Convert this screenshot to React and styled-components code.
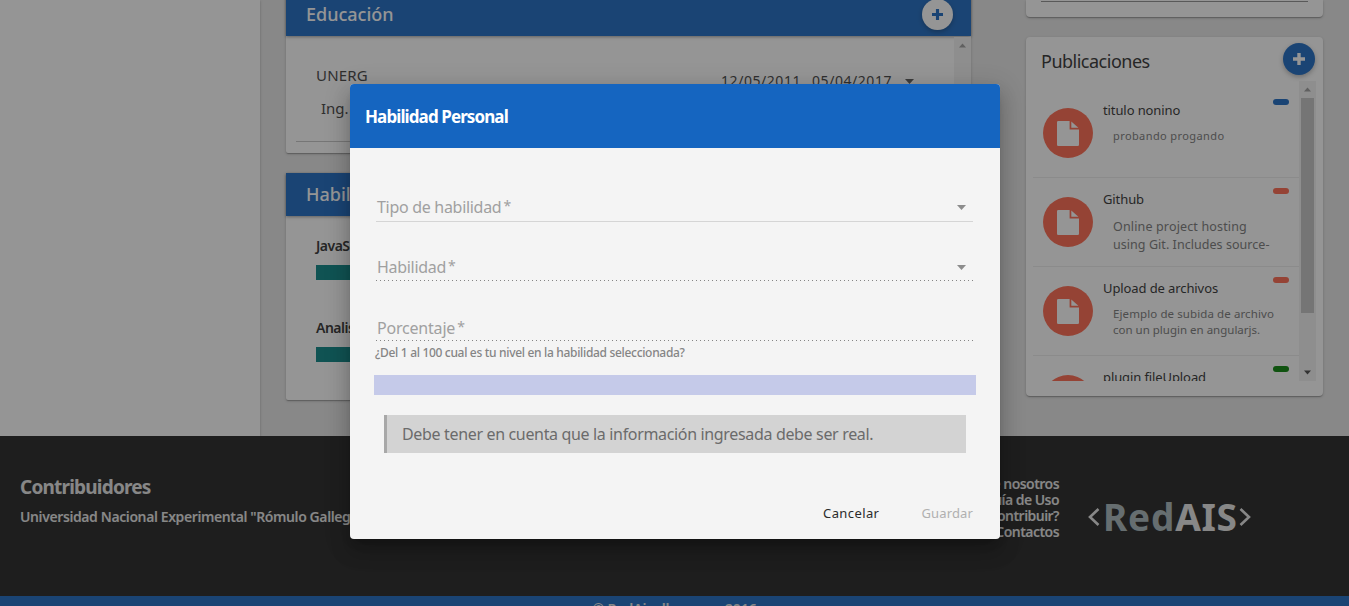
import React from "react";
import styled, { createGlobalStyle } from "styled-components";

const Global = createGlobalStyle`
  * { box-sizing: border-box; }
  body { margin: 0; overflow: hidden; background: #e6e6e6; font-family: "Noto Sans", "Open Sans", sans-serif; color: #2b2b2b; }
`;
const shadow = "0 1px 3px rgba(0,0,0,.2), 0 1px 1px rgba(0,0,0,.14), 0 2px 1px -1px rgba(0,0,0,.12)";

const Text = styled.span`
  display: block;
  white-space: nowrap;
  font-size: ${(p) => p.$size || 14}px;
  line-height: ${(p) => p.$lh || 20}px;
  letter-spacing: ${(p) => p.$ls || 0}px;
  font-weight: ${(p) => p.$w || 400};
  color: ${(p) => p.$c || "inherit"};
`;
const Page = styled.div`height: 606px; overflow: hidden; display: flex; flex-direction: column;`;
const Content = styled.div`height: 436px; flex: none; display: flex; overflow: hidden;`;
const Sidebar = styled.aside`width: 260px; background: #fff; box-shadow: ${shadow}; margin-right: 26px;`;
const Main = styled.main`width: 685px; margin: -7px 55px 0 0; display: flex; flex-direction: column; gap: 20px;`;
const Card = styled.section`height: ${(p) => p.$h}px; background: #fff; border-radius: 2px; box-shadow: ${shadow};`;
const CardHead = styled.header`
  height: 43px; padding: 0 18px 0 20px; background: #1565c0; color: #fff;
  display: flex; align-items: center; justify-content: space-between;
  box-shadow: 0 1px 3px rgba(0,0,0,.4);
  > span { padding-bottom: 2px; }
`;
const Round = styled.div`
  width: ${(p) => p.$d}px; height: ${(p) => p.$d}px; border-radius: 50%; flex: none;
  background: ${(p) => p.$bg}; color: ${(p) => p.$fg};
  display: flex; align-items: center; justify-content: center;
  box-shadow: ${(p) => (p.$flat ? "none" : "0 2px 5px rgba(0,0,0,.3)")};
`;
const EduBody = styled.div`display: flex; height: 117px; padding-top: 1px;`;
const EduMain = styled.div`flex: 1; padding: 28px 0 0 10px;`;
const EduRow = styled.div`display: flex; padding: 0 40px 0 20px; justify-content: space-between;`;
const EduDates = styled.div`display: flex; gap: 11px; padding-top: 6px; align-items: center; > svg { margin-left: 2px; }`;
const EduSub = styled.div`padding: 7px 0 23px 25px; border-bottom: 1px solid #c4c4c4;`;
const Track = styled.div`
  width: 17px; background: #f1f1f1; display: flex; flex-direction: column;
  align-items: center; justify-content: space-between; padding: 6px 0;
`;
const Thumb = styled.div`width: 13px; height: 215px; background: #c1c1c1; margin: 6px 0 auto;`;
const Skills = styled.div`padding: 20px 30px; display: flex; flex-direction: column; gap: 38px;`;
const Bar = styled.div`height: 15px; margin-top: 9px; background: #008080;`;

const Aside = styled.aside`width: 297px; display: flex; flex-direction: column; gap: 20px;`;
const Stub = styled.section`height: 17px; background: #fff; border-radius: 0 0 4px 4px; padding: 1px 15px; box-shadow: ${shadow};`;
const Rule = styled.div`height: 1px; background: #8c8c8c;`;
const Pubs = styled.section`height: 359px; background: #fff; border-radius: 4px; box-shadow: ${shadow};`;
const PubHead = styled.header`height: 44px; padding: 6px 8px 0 15px; display: flex; justify-content: space-between;`;
const PubScroll = styled.div`height: 300px; padding: 0 7px 0 5px; display: flex; overflow: hidden;`;
const PubList = styled.div`flex: 1; padding-top: 8px; min-width: 0;`;
const Pub = styled.article`
  height: 89px; margin-left: 2px; border-bottom: 1px solid #ececec;
  padding: 10px 10px 0; display: flex; gap: 10px;
  > ${Round} { margin-top: 9px; }
`;
const PubText = styled.div`flex: 1; min-width: 0;`;
const PubTop = styled.div`display: flex; justify-content: space-between; > span { padding-top: 1px; }`;
const Desc = styled.div`padding: ${(p) => p.$pt}px 0 0 10px; color: #757575;`;
const Badge = styled.i`width: 16px; height: 6px; border-radius: 3px; background: ${(p) => p.$bg};`;

const Footer = styled.footer`height: 160px; flex: none; background: #1b1b1b; color: #e5e5e5; display: flex;`;
const Credits = styled.div`width: 840px; padding: 40px 20px;`;
const Links = styled.div`width: 219px; padding-top: 40px; display: flex; flex-direction: column; align-items: flex-end;`;
const Logo = styled.div`padding: 52px 0 0 29px; display: flex; align-items: center; height: 110px;`;
const LogoName = styled.div`display: flex; padding: 0 1px 0 3px;`;
const Bottom = styled.div`height: 10px; background: #1565c0; color: #fff; display: flex; justify-content: center; overflow: hidden;`;

const Backdrop = styled.div`
  position: absolute; inset: 0; height: 606px; background: rgba(33,33,33,.48);
  display: flex; justify-content: center; align-items: flex-start; padding: 84px 0 0 1px;
`;
const Dialog = styled.div`
  width: 650px; height: 455px; border-radius: 4px; overflow: hidden; background: #f4f4f4;
  box-shadow: 0 7px 8px -4px rgba(0,0,0,.2), 0 13px 19px 2px rgba(0,0,0,.14), 0 5px 24px 4px rgba(0,0,0,.12);
`;
const DialogHead = styled.header`height: 64px; background: #1565c0; color: #fff; padding: 1px 15px 0; display: flex; align-items: center;`;
const Form = styled.div`padding: 48px 24px 0;`;
const Field = styled.div`
  height: ${(p) => p.$h}px; margin: 0 3px 0 2px; padding: ${(p) => p.$pt || 0}px 7px 0 1px;
  display: flex; align-items: center; justify-content: space-between;
`;
const Label = styled.div`display: flex; gap: 2px; color: #a0a0a0; margin-top: ${(p) => p.$mt || 0}px;`;
const Line = styled.div`
  height: 1px; margin: ${(p) => p.$mt}px 3px 0 2px;
  background: ${(p) => (p.$dotted ? "repeating-linear-gradient(90deg, #858585 0 1px, transparent 1px 4px)" : "#d5d5d5")};
`;
const Hint = styled.div`padding: 2px 0 0 1px;`;
const Progress = styled.div`height: 20px; margin-top: 12px; background: #c5cae9;`;
const Notice = styled.div`
  height: 38px; margin: 20px 10px 0; padding-left: 15px; border-left: 3px solid #a8a8a8;
  background: #d3d3d3; display: flex; align-items: center;
`;
const Actions = styled.div`display: flex; justify-content: flex-end; gap: 42px; padding: 50px 27px 0;`;

const Plus = ({ s = 12 }) => (
  <svg width={s} height={s} viewBox="0 0 12 12"><path d="M4.3 0h3.4v4.3H12v3.4H7.7V12H4.3V7.7H0V4.3h4.3z" fill="currentColor" /></svg>
);
const Caret = ({ up, c = "#8c8c8c", w = 9 }) => (
  <svg width={w} height="5" viewBox="0 0 9 5"><path d={up ? "M0 5L4.5 0 9 5z" : "M0 0h9L4.5 5z"} fill={c} /></svg>
);
const FileIcon = () => (
  <svg width="22" height="25" viewBox="0 0 22 25" fill="#fff">
    <path d="M1.3 0H12.6V8.4H22V23.7Q22 25 20.7 25H1.3Q0 25 0 23.7V1.3Q0 0 1.3 0z" />
    <path d="M14.3.5L21.4 6.8H14.3z" />
  </svg>
);
const Chevron = ({ right }) => (
  <svg width="12" height="18" viewBox="0 0 12 18" fill="none" stroke="#e5e5e5" strokeWidth="2.6">
    <path d={right ? "M1.5 1L10 9 1.5 17" : "M10.5 1L2 9 10.5 17"} />
  </svg>
);

const pubs = [
  { t: "titulo nonino", b: "#1565c0", s: 11, lh: 16, pt: 8, ls: [0.4], d: ["probando progando"] },
  { t: "Github", b: "#ff6347", s: 12.5, lh: 18, pt: 9, ls: [0.15, 0.05], d: ["Online project hosting", "using Git. Includes source-"] },
  { t: "Upload de archivos", b: "#ff6347", s: 11.5, lh: 16, pt: 8, ls: [0.1, 0], d: ["Ejemplo de subida de archivo", "con un plugin en angularjs."] },
  { t: "plugin fileUpload", b: "#008000", s: 12, lh: 16, pt: 7, ls: [], d: [] },
];

function Required({ children, ls = -0.3, mt }) {
  return <Label $mt={mt}><Text $size={16} $ls={ls}>{children}</Text><Text $size={14} $lh={18}>*</Text></Label>;
}

export default function App() {
  return (
    <>
      <Global />
      <Page>
        <Content>
          <Sidebar />
          <Main>
            <Card $h={160}>
              <CardHead><Text $size={18} $w={500}>Educación</Text><Round $d={31} $bg="#fff" $fg="#1565c0"><Plus s={11} /></Round></CardHead>
              <EduBody>
                <EduMain>
                  <EduRow>
                    <Text $size={15} $ls={0.2} $c="#3c3c3c">UNERG</Text>
                    <EduDates>
                      <Text $ls={0.55} $c="#3c3c3c">12/05/2011</Text>
                      <Text $ls={0.55} $c="#3c3c3c">05/04/2017</Text>
                      <Caret c="#555" />
                    </EduDates>
                  </EduRow>
                  <EduSub><Text $size={15} $c="#3c3c3c">Ing.</Text></EduSub>
                </EduMain>
                <Track><Caret up c="#999" w={7} /></Track>
              </EduBody>
            </Card>
            <Card $h={227}>
              <CardHead><Text $size={18} $w={500}>Habilidades</Text></CardHead>
              <Skills>
                <div><Text $w={600} $ls={-0.5}>JavaScript</Text><Bar /></div>
                <div><Text $w={600} $ls={-0.5}>Analista</Text><Bar /></div>
              </Skills>
            </Card>
          </Main>
          <Aside>
            <Stub><Rule /></Stub>
            <Pubs>
              <PubHead><Text $size={18} $lh={37} $ls={-0.5}>Publicaciones</Text><Round $d={32} $bg="#1565c0" $fg="#fff"><Plus /></Round></PubHead>
              <PubScroll>
                <PubList>
                  {pubs.map((p) => (
                    <Pub key={p.t}>
                      <Round $d={50} $bg="#ff6347" $flat><FileIcon /></Round>
                      <PubText>
                        <PubTop><Text $size={13} $ls={-0.1}>{p.t}</Text><Badge $bg={p.b} /></PubTop>
                        <Desc $pt={p.pt}>{p.d.map((d, i) => <Text key={d} $size={p.s} $lh={p.lh} $ls={p.ls[i]}>{d}</Text>)}</Desc>
                      </PubText>
                    </Pub>
                  ))}
                </PubList>
                <Track><Caret up c="#999" w={7} /><Thumb /><Caret c="#444" w={7} /></Track>
              </PubScroll>
            </Pubs>
          </Aside>
        </Content>
        <Footer>
          <Credits>
            <Text $size={19} $lh={22} $w={700} $ls={-0.8}>Contribuidores</Text>
            <Text $lh={38} $w={600} $ls={-0.4}>Universidad Nacional Experimental "Rómulo Gallegos"</Text>
          </Credits>
          <Links>
            {["Sobre nosotros", "Guía de Uso", "¿Cómo contribuir?", "Contactos"].map((t) => <Text key={t} $lh={16} $w={600} $ls={-0.55}>{t}</Text>)}
          </Links>
          <Logo>
            <Chevron />
            <LogoName>
              <Text $size={37} $lh={38} $w={700} $ls={0.8} $c="#a5b5b8">Red</Text>
              <Text $size={37} $lh={38} $w={700} $ls={0.7}>AIS</Text>
            </LogoName>
            <Chevron right />
          </Logo>
        </Footer>
        <Bottom><Text $lh={25} $w={600} $ls={-0.1} $c="#e5e5e5">© RedAisoll.com.ve 2016</Text></Bottom>
      </Page>
      <Backdrop>
        <Dialog>
          <DialogHead><Text $size={17} $w={700} $ls={-0.9}>Habilidad Personal</Text></DialogHead>
          <Form>
            <Field $h={23}><Required mt={-2}>Tipo de habilidad</Required><Caret /></Field>
            <Line $mt={2} />
            <Field $h={58} $pt={32}><Required>Habilidad</Required><Caret /></Field>
            <Line $dotted $mt={0} />
            <Field $h={59} $pt={34}><Required ls={-0.2}>Porcentaje</Required></Field>
            <Line $dotted $mt={0} />
            <Hint><Text $size={12} $w={500} $ls={-0.32} $c="#858585">¿Del 1 al 100 cual es tu nivel en la habilidad seleccionada?</Text></Hint>
            <Progress />
            <Notice><Text $size={16} $ls={-0.34} $c="#6b6b6b">Debe tener en cuenta que la información ingresada debe ser real.</Text></Notice>
          </Form>
          <Actions><Text $size={13} $ls={0.4}>Cancelar</Text><Text $size={13} $ls={0.15} $c="#b0b0b0">Guardar</Text></Actions>
        </Dialog>
      </Backdrop>
    </>
  );
}
